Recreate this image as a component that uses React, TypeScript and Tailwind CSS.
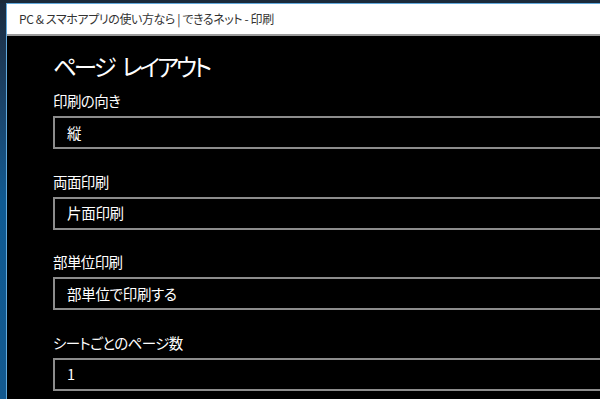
export default function App() {
  const fields = [
    { label: '印刷の向き', value: '縦' },
    { label: '両面印刷', value: '片面印刷' },
    { label: '部単位印刷', value: '部単位で印刷する' },
    { label: 'シートごとのページ数', value: '1' },
  ];

  return (
    <div
      className="w-[600px] h-[399px] overflow-hidden flex flex-col bg-[#1a2a3b] [font-feature-settings:'palt']"
      style={{ fontFamily: '"Noto Sans CJK JP", "Noto Sans", sans-serif' }}
    >
      {/* desktop strip */}
      <div className="h-[3px] shrink-0 bg-[#1c2a3a]" />
      <div className="flex flex-1 min-h-0">
        <div className="w-[6px] shrink-0 bg-gradient-to-b from-[#1b2c40] via-[#0f5a92] to-[#13598f]" />
        {/* window */}
        <div className="flex-1 flex flex-col border-l border-t border-[#62a9dc] bg-black min-w-0">
          <div className="h-[32px] shrink-0 bg-white border-b-2 border-[#9a9a9a] flex items-center pl-[12px]">
            <span className="text-[12px] tracking-[-0.4px] text-[#333]">
              PC &amp; スマホアプリの使い方なら | できるネット - 印刷
            </span>
          </div>
          <div className="flex-1 pl-[46px] pt-[15px] overflow-hidden">
            <h1 className="text-[23.5px] leading-[30px] tracking-[-3px] text-white font-normal">
              ページ<span className="ml-[8px]">レイアウト</span>
            </h1>
            <div className="flex flex-col gap-[22.5px] mt-[10px]">
              {fields.map((f) => (
                <div key={f.label}>
                  <div className="text-[14.5px] leading-[20px] tracking-[-0.6px] text-white mb-[5px]">{f.label}</div>
                  <div className="w-[620px] h-[33px] border-2 border-[#8c8c8c] flex items-center pl-[12px] text-[14.5px] tracking-[-0.3px] text-white">
                    {f.value}
                  </div>
                </div>
              ))}
            </div>
          </div>
        </div>
      </div>
    </div>
  );
}
